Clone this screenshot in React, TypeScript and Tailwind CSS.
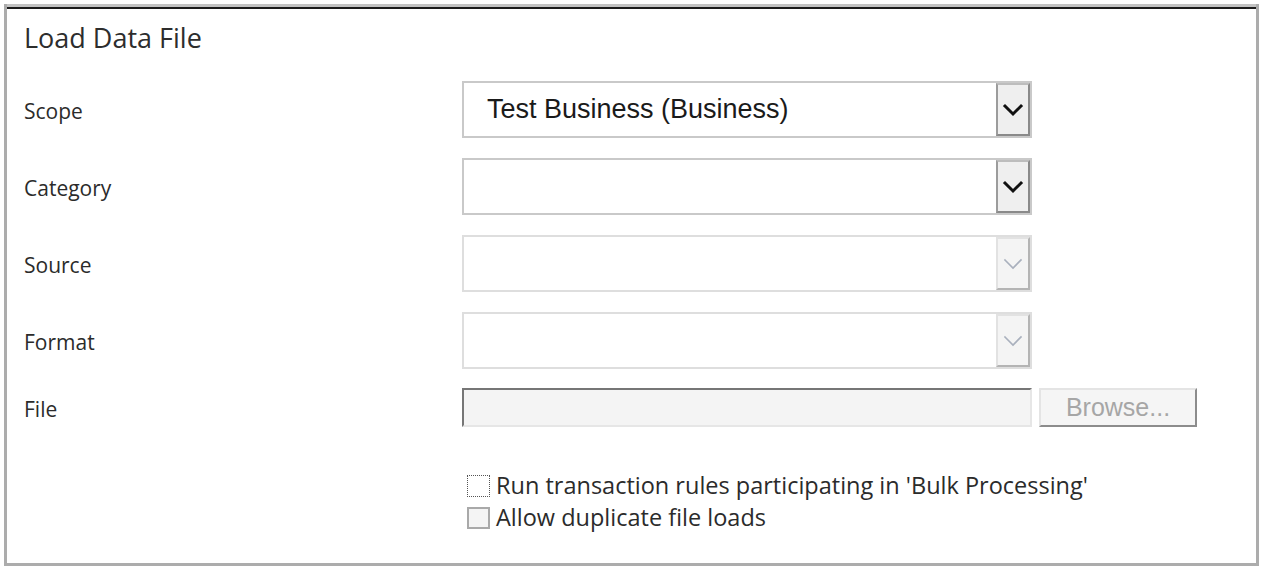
import React from 'react';

const labelFont = { fontFamily: '"Open Sans", "DejaVu Sans", sans-serif' };
const arialFont = { fontFamily: '"Liberation Sans", Arial, sans-serif' };

const Chevron: React.FC<{ disabled?: boolean }> = ({ disabled }) => (
  <svg width="22" height="14" viewBox="0 0 22 14" fill="none">
    <path
      d="M3 3 L11 11 L19 3"
      stroke={disabled ? '#a9b0bd' : '#111'}
      strokeWidth={disabled ? 1.6 : 3}
      strokeLinecap="square"
    />
  </svg>
);

const SelectBox: React.FC<{ value?: string; disabled?: boolean }> = ({ value, disabled }) => (
  <div
    className={`flex w-[570px] h-[57px] border-2 bg-white ${
      disabled ? 'border-[#dedede]' : 'border-[#c9c9c9]'
    }`}
  >
    <div className="flex-1 flex items-center pl-[23px] text-[27px] text-[#1a1a1a]" style={arialFont}>
      {value}
    </div>
    <div
      className={`w-[34px] h-full flex items-center justify-center border-2 ${
        disabled
          ? 'bg-[#f4f4f4] border-t-[#e2e2e2] border-l-[#e2e2e2] border-r-[#b4b4b4] border-b-[#b4b4b4]'
          : 'bg-[#efefef] border-t-[#bdbdbd] border-l-[#9c9c9c] border-r-[#8a8a8a] border-b-[#8a8a8a]'
      }`}
    >
      <Chevron disabled={disabled} />
    </div>
  </div>
);

const rows = [
  { label: 'Scope', value: 'Test Business (Business)' },
  { label: 'Category', value: '' },
  { label: 'Source', value: '', disabled: true },
  { label: 'Format', value: '', disabled: true },
];

export default function App() {
  return (
    <div className="w-[1265px] h-[574px] bg-white overflow-hidden" style={labelFont}>
      <div className="ml-[4px] mt-[4px] w-[1255px] h-[562px] flex flex-col border-x-[3px] border-b-[3px] border-[#acacac]">
        {/* cut-off tab strip */}
        <div className="h-[3px] bg-[#c3c3c3]" />
        <div className="h-[2px] bg-[#1c1c1c]" />

        <div className="pl-[17px] pt-[13px]">
          <h1 className="text-[27px] leading-[32px] text-[#2d2d2d]">Load Data File</h1>

          <div className="mt-[27px] flex flex-col gap-[20px]">
            {rows.map((r) => (
              <div key={r.label} className="flex items-center">
                <div className="w-[438px] text-[21px] text-[#2b2b2b] pt-[4px]">{r.label}</div>
                <SelectBox value={r.value} disabled={r.disabled} />
              </div>
            ))}

            <div className="flex items-center -mt-[1px]">
              <div className="w-[438px] text-[21px] text-[#2b2b2b] pt-[4px]">File</div>
              <div className="w-[570px] h-[39px] bg-[#f4f4f4] border-2 border-t-[#767676] border-l-[#767676] border-r-[#e6e6e6] border-b-[#e6e6e6]" />
              <div
                className="ml-[7px] w-[158px] h-[39px] flex items-center justify-center bg-[#f5f5f5] border-2 border-t-[#e4e4e4] border-l-[#e4e4e4] border-r-[#8c8c8c] border-b-[#8c8c8c] text-[25px] text-[#a6a6a6]"
                style={arialFont}
              >
                Browse...
              </div>
            </div>
          </div>

          <div className="mt-[47px] ml-[443px] flex flex-col gap-[9px] text-[23.5px] text-[#2b2b2b]">
            <div className="flex items-center gap-[6px]">
              <div className="w-[23px] h-[22px] border border-dotted border-[#555]" />
              <span className="leading-[23px]">Run transaction rules participating in 'Bulk Processing'</span>
            </div>
            <div className="flex items-center gap-[6px]">
              <div className="w-[23px] h-[22px] border-2 border-[#a9a9a9] bg-[#f4f4f4]" />
              <span className="leading-[23px]">Allow duplicate file loads</span>
            </div>
          </div>
        </div>
      </div>
    </div>
  );
}
